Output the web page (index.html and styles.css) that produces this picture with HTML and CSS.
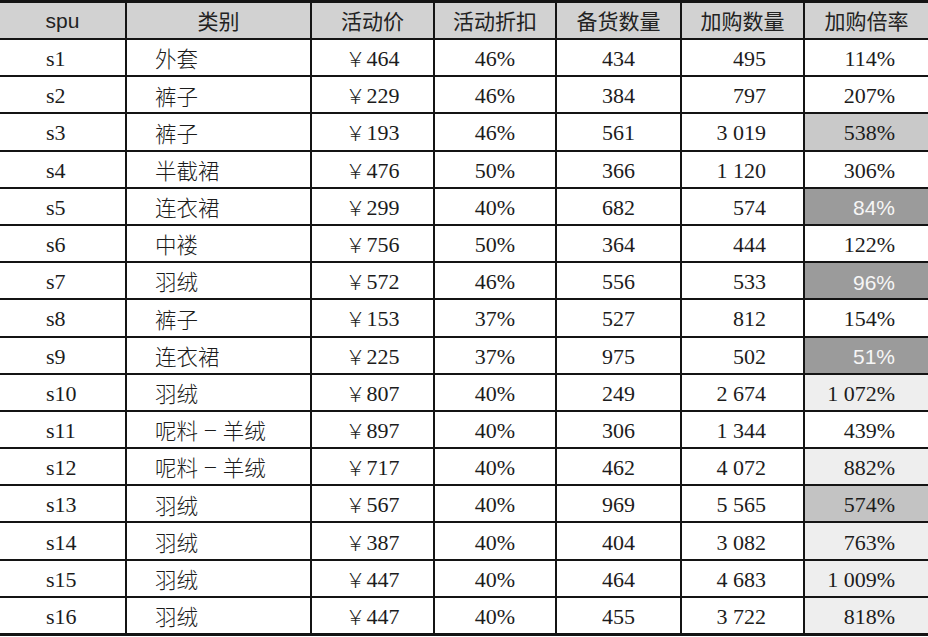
FILE: index.html
```html
<!DOCTYPE html>
<html lang="zh-CN">
<head>
<meta charset="utf-8">
<title>加购倍率</title>
<link rel="stylesheet" href="styles.css">
</head>
<body>
<div class="sheet">
  <div class="cell head">spu</div>
  <div class="cell head cjk">类别</div>
  <div class="cell head cjk">活动价</div>
  <div class="cell head cjk">活动折扣</div>
  <div class="cell head cjk">备货数量</div>
  <div class="cell head cjk">加购数量</div>
  <div class="cell head cjk">加购倍率</div>

  <div class="cell id">s1</div><div class="cell cat">外套</div><div class="cell mid"><span class="yen">￥</span>464</div><div class="cell mid">46%</div><div class="cell mid">434</div><div class="cell qty">495</div><div class="cell rate">114%</div>
  <div class="cell id">s2</div><div class="cell cat">裤子</div><div class="cell mid"><span class="yen">￥</span>229</div><div class="cell mid">46%</div><div class="cell mid">384</div><div class="cell qty">797</div><div class="cell rate">207%</div>
  <div class="cell id">s3</div><div class="cell cat">裤子</div><div class="cell mid"><span class="yen">￥</span>193</div><div class="cell mid">46%</div><div class="cell mid">561</div><div class="cell qty">3 019</div><div class="cell rate tone-mid">538%</div>
  <div class="cell id">s4</div><div class="cell cat">半截裙</div><div class="cell mid"><span class="yen">￥</span>476</div><div class="cell mid">50%</div><div class="cell mid">366</div><div class="cell qty">1 120</div><div class="cell rate">306%</div>
  <div class="cell id">s5</div><div class="cell cat">连衣裙</div><div class="cell mid"><span class="yen">￥</span>299</div><div class="cell mid">40%</div><div class="cell mid">682</div><div class="cell qty">574</div><div class="cell rate tone-dark">84%</div>
  <div class="cell id">s6</div><div class="cell cat">中褛</div><div class="cell mid"><span class="yen">￥</span>756</div><div class="cell mid">50%</div><div class="cell mid">364</div><div class="cell qty">444</div><div class="cell rate">122%</div>
  <div class="cell id">s7</div><div class="cell cat">羽绒</div><div class="cell mid"><span class="yen">￥</span>572</div><div class="cell mid">46%</div><div class="cell mid">556</div><div class="cell qty">533</div><div class="cell rate tone-dark">96%</div>
  <div class="cell id">s8</div><div class="cell cat">裤子</div><div class="cell mid"><span class="yen">￥</span>153</div><div class="cell mid">37%</div><div class="cell mid">527</div><div class="cell qty">812</div><div class="cell rate">154%</div>
  <div class="cell id">s9</div><div class="cell cat">连衣裙</div><div class="cell mid"><span class="yen">￥</span>225</div><div class="cell mid">37%</div><div class="cell mid">975</div><div class="cell qty">502</div><div class="cell rate tone-dark">51%</div>
  <div class="cell id">s10</div><div class="cell cat">羽绒</div><div class="cell mid"><span class="yen">￥</span>807</div><div class="cell mid">40%</div><div class="cell mid">249</div><div class="cell qty">2 674</div><div class="cell rate tone-light">1 072%</div>
  <div class="cell id">s11</div><div class="cell cat">呢料<span class="dash">–</span>羊绒</div><div class="cell mid"><span class="yen">￥</span>897</div><div class="cell mid">40%</div><div class="cell mid">306</div><div class="cell qty">1 344</div><div class="cell rate">439%</div>
  <div class="cell id">s12</div><div class="cell cat">呢料<span class="dash">–</span>羊绒</div><div class="cell mid"><span class="yen">￥</span>717</div><div class="cell mid">40%</div><div class="cell mid">462</div><div class="cell qty">4 072</div><div class="cell rate tone-light">882%</div>
  <div class="cell id">s13</div><div class="cell cat">羽绒</div><div class="cell mid"><span class="yen">￥</span>567</div><div class="cell mid">40%</div><div class="cell mid">969</div><div class="cell qty">5 565</div><div class="cell rate tone-mid2">574%</div>
  <div class="cell id">s14</div><div class="cell cat">羽绒</div><div class="cell mid"><span class="yen">￥</span>387</div><div class="cell mid">40%</div><div class="cell mid">404</div><div class="cell qty">3 082</div><div class="cell rate tone-light">763%</div>
  <div class="cell id">s15</div><div class="cell cat">羽绒</div><div class="cell mid"><span class="yen">￥</span>447</div><div class="cell mid">40%</div><div class="cell mid">464</div><div class="cell qty">4 683</div><div class="cell rate tone-light">1 009%</div>
  <div class="cell id">s16</div><div class="cell cat">羽绒</div><div class="cell mid"><span class="yen">￥</span>447</div><div class="cell mid">40%</div><div class="cell mid">455</div><div class="cell qty">3 722</div><div class="cell rate tone-light">818%</div>
</div>
</body>
</html>
```

FILE: styles.css
```css
html, body {
  margin: 0;
  padding: 0;
  background: #ffffff;
}

.sheet {
  box-sizing: border-box;
  width: 928px;
  height: 636px;
  display: grid;
  grid-template-columns: 125px 183px 121px 120px 123px 121px 123px;
  grid-template-rows: 35px repeat(16, 1fr);
  column-gap: 2px;
  row-gap: 2px;
  background: #141414;
  border-top: 3px solid #141414;
  border-bottom: 3px solid #141414;
}

.cell {
  box-sizing: border-box;
  display: flex;
  align-items: center;
  justify-content: center;
  background: #ffffff;
  color: #1c1c1c;
  font-family: "Liberation Serif", "Noto Sans CJK SC", serif;
  font-size: 22px;
  line-height: 1;
  white-space: nowrap;
  overflow: hidden;
  padding-top: 3px;
}

.head {
  background: #d2d2d2;
  font-family: "Liberation Sans", "Noto Sans CJK SC", sans-serif;
  font-size: 21px;
  color: #222222;
  padding-top: 0;
  padding-bottom: 1px;
}

.head.cjk {
  font-family: "Noto Sans CJK SC", sans-serif;
  font-weight: 400;
}

.id {
  justify-content: flex-start;
  padding-left: 46px;
}

.cat {
  justify-content: flex-start;
  padding-left: 28px;
  padding-top: 1px;
  font-family: "Noto Sans CJK SC", sans-serif;
  font-weight: 300;
  font-size: 21.5px;
}

.dash {
  font-family: "Liberation Serif", serif;
  margin: 0 7px;
}

.yen {
  font-family: "Noto Sans CJK SC", sans-serif;
  font-weight: 300;
  font-size: 20px;
  margin-right: 1px;
}

.qty {
  justify-content: flex-end;
  padding-right: 37px;
}

.rate {
  justify-content: flex-end;
  padding-right: 33px;
}

.tone-light {
  background: #eeeeee;
}

.tone-mid {
  background: #c9c9c9;
}

.tone-mid2 {
  background: #c3c3c3;
}

.tone-dark {
  background: #9b9b9b;
  color: #f6f6f6;
  font-family: "Liberation Sans", sans-serif;
  font-size: 21px;
}
```
